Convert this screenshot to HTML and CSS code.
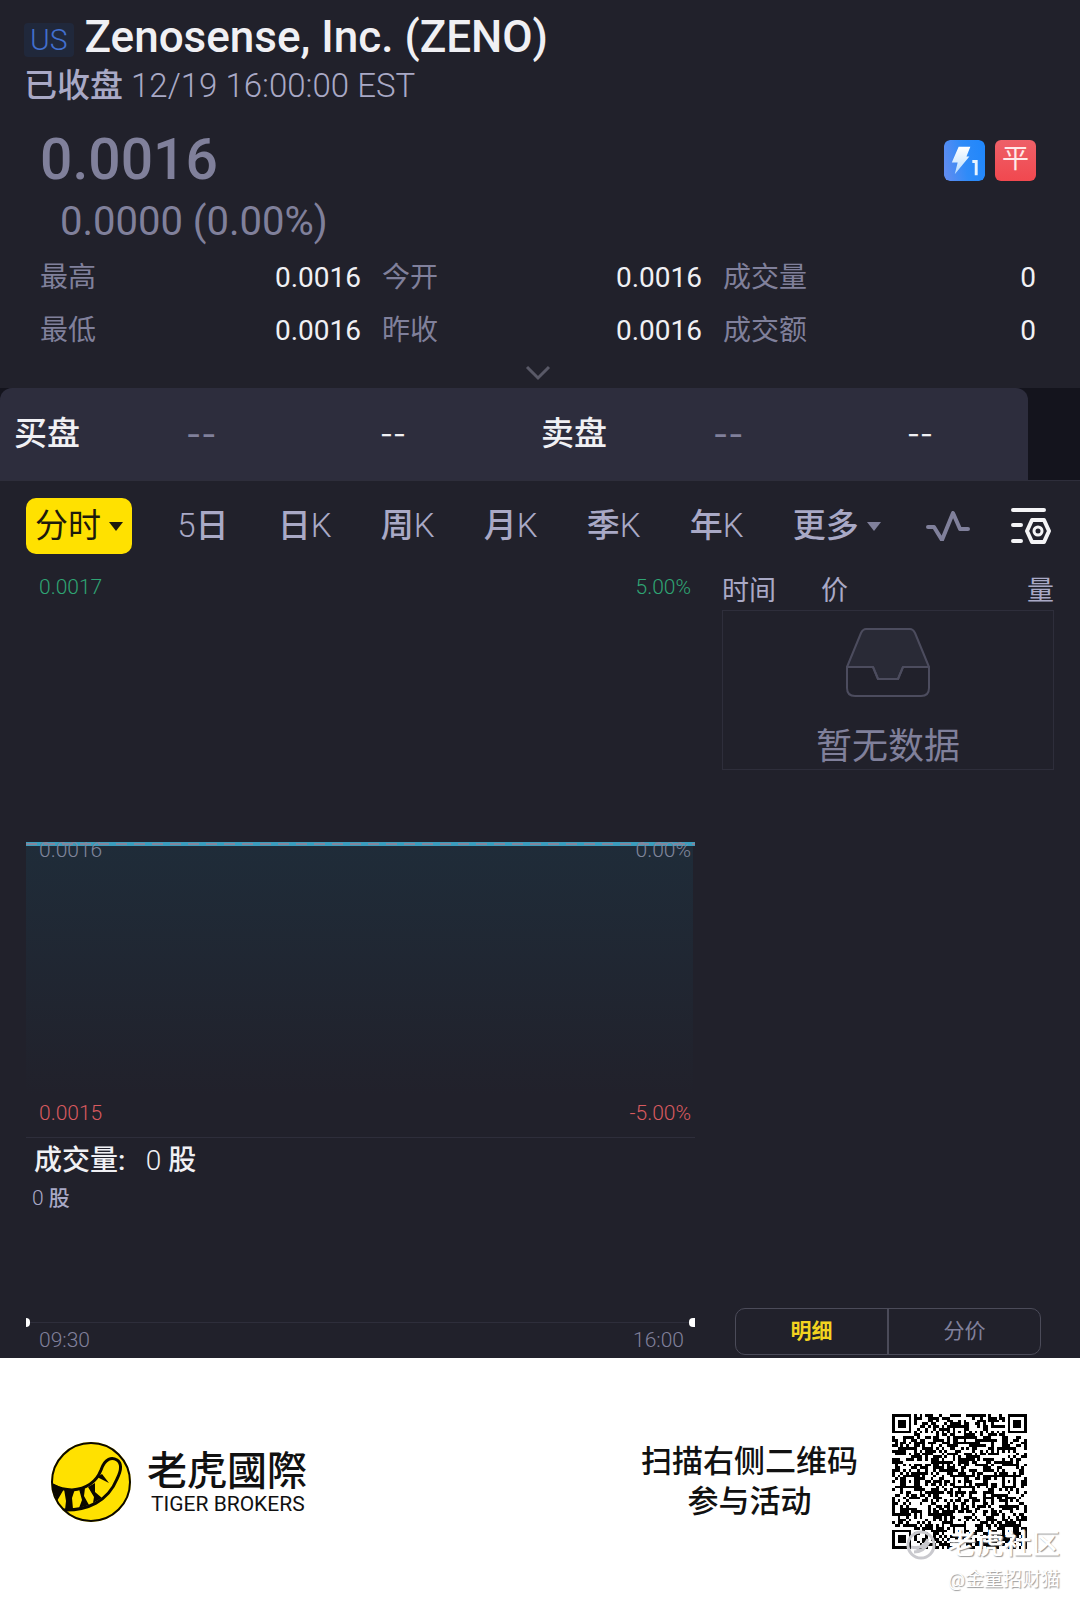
FILE: index.html
```html
<!DOCTYPE html>
<html lang="zh-CN">
<head>
    <meta charset="UTF-8">
    <meta name="viewport" content="width=device-width, initial-scale=1.0">
    <title>Zenosense, Inc. (ZENO)</title>
    <link rel="stylesheet" href="styles.css">
</head>
<body>
    <main class="quote">
        <header class="head">
            <div class="title-row">
                <span class="market">US</span>
                <h1>Zenosense, Inc. (ZENO)</h1>
            </div>
            <p class="status"><b>已收盘</b> 12/19 16:00:00 EST</p>
        </header>

        <section class="summary">
            <div class="price-row">
                <div class="price">0.0016</div>
                <div class="badges">
                    <svg class="badge" viewBox="0 0 42 42" role="img" aria-label="Level 1">
                        <defs>
                            <linearGradient id="blue" x1="0" y1="0.6" x2="1" y2="0.4">
                                <stop offset="0" stop-color="#5f8cf0"/>
                                <stop offset="0.5" stop-color="#2f8bf8"/>
                                <stop offset="1" stop-color="#2187fb"/>
                            </linearGradient>
                            <linearGradient id="bolt" x1="0" y1="0" x2="0" y2="1">
                                <stop offset="0" stop-color="#ffffff"/>
                                <stop offset="1" stop-color="#b5dcff"/>
                            </linearGradient>
                        </defs>
                        <rect width="42" height="42" rx="6" fill="url(#blue)"/>
                        <path d="M15 7h12l-4 10h3L11 35l3-12H8z" fill="url(#bolt)"/>
                        <path d="M29 22h4v14" fill="none" stroke="#e8f4ff" stroke-width="3"/>
                    </svg>
                    <span class="badge flat">平</span>
                </div>
            </div>
            <div class="change">0.0000 (0.00%)</div>
            <dl class="stats">
                <div><dt>最高</dt><dd>0.0016</dd></div>
                <div><dt>今开</dt><dd>0.0016</dd></div>
                <div><dt>成交量</dt><dd>0</dd></div>
                <div><dt>最低</dt><dd>0.0016</dd></div>
                <div><dt>昨收</dt><dd>0.0016</dd></div>
                <div><dt>成交额</dt><dd>0</dd></div>
            </dl>
            <button class="expand" type="button" aria-label="展开">
                <svg width="26" height="16" viewBox="0 0 26 16"><path d="M2 2l11 11L24 2" fill="none" stroke="#595967" stroke-width="3"/></svg>
            </button>
        </section>

        <section class="book">
            <div class="book-inner">
                <strong>买盘</strong><span class="level">--</span><span class="size">--</span>
                <strong>卖盘</strong><span class="level">--</span><span class="size">--</span>
            </div>
        </section>

        <nav class="tabs">
            <button class="tab active" type="button">分时<i class="caret"></i></button>
            <button class="tab" type="button"><span>5</span>日</button>
            <button class="tab" type="button">日<span>K</span></button>
            <button class="tab" type="button">周<span>K</span></button>
            <button class="tab" type="button">月<span>K</span></button>
            <button class="tab" type="button">季<span>K</span></button>
            <button class="tab" type="button">年<span>K</span></button>
            <button class="tab" type="button">更多<i class="caret"></i></button>
            <button type="button" aria-label="画线">
                <svg width="44" height="30" viewBox="0 2 44 30"><path d="M2 18h6l8 13L27 4l7 16h8" fill="none" stroke="#80809b" stroke-width="4" stroke-linecap="round" stroke-linejoin="round"/></svg>
            </button>
            <button type="button" aria-label="设置">
                <svg width="41" height="38" viewBox="0 0 41 38" fill="none" stroke="#f4f4f6" stroke-width="4">
                    <path d="M2 3h31M2 18h8M2 34h8" stroke-linecap="round"/>
                    <path d="M21 13h12l5 11-5 11H21l-5-11z" stroke-linejoin="round"/>
                    <circle cx="27" cy="24" r="4" stroke-width="3"/>
                </svg>
            </button>
        </nav>

        <section class="body">
            <div class="charts">
                <div class="chart">
                    <svg class="plot" viewBox="0 0 669 567" preserveAspectRatio="none" aria-hidden="true">
                        <defs>
                            <linearGradient id="area" x1="0" y1="0" x2="0" y2="1">
                                <stop offset="0" stop-color="#1f2c39"/>
                                <stop offset="1" stop-color="#21212b"/>
                            </linearGradient>
                        </defs>
                        <rect x="0" y="274" width="667" height="250" fill="url(#area)"/>
                        <path d="M0 274h669" stroke="#3a9dbd" stroke-width="4"/>
                        <path d="M0 274h669" stroke="#80869c" stroke-width="2" stroke-dasharray="11 7"/>
                    </svg>
                    <div class="scale up"><span>0.0017</span><span>5.00%</span></div>
                    <div class="scale mid"><span>0.0016</span><span>0.00%</span></div>
                    <div class="scale down"><span>0.0015</span><span>-5.00%</span></div>
                </div>
                <div class="volume">
                    <h2><b>成交量:</b>&nbsp; &nbsp;0 <b>股</b></h2>
                    <p>0 <b>股</b></p>
                </div>
                <div class="axis"><span>09:30</span><span>16:00</span></div>
            </div>

            <aside class="trades">
                <div class="trades-head"><span>时间</span><span>价</span><span>量</span></div>
                <div class="empty">
                    <svg width="86" height="70" viewBox="0 0 86 70" stroke="#4c4c5e" stroke-width="2" stroke-linejoin="round">
                        <path d="M2 39L16 5q2-4 5-4h44q3 0 5 4l14 34H58l-5 12H33l-5-12z" fill="#292a36"/>
                        <path d="M2 39v21q0 8 8 8h66q8 0 8-8V39H58l-5 12H33l-5-12z" fill="none"/>
                    </svg>
                    <p>暂无数据</p>
                </div>
                <div class="switch">
                    <button class="on" type="button">明细</button>
                    <button type="button">分价</button>
                </div>
            </aside>
        </section>
    </main>

    <footer class="foot">
        <div class="brand">
            <svg width="82" height="82" viewBox="0 0 82 82" aria-hidden="true">
                <defs><clipPath id="disc"><circle cx="41" cy="41" r="39"/></clipPath></defs>
                <circle cx="41" cy="41" r="40" fill="#ffe100"/>
                <g clip-path="url(#disc)">
                    <path d="M0 43Q12 49 22 49 44 47 51 29C55 17 62 16 67 19 73 23 70 32 67 38 58 60 38 70 12 69" fill="none" stroke="#0b0800" stroke-width="3"/>
                    <path d="M0 41l14 7-7 12zM14 48h11l-3 9 1 11-8 1 1-9zM29 48l6-1-1 8 5 9-10 3 3-8zM38 46l7-4v9l7 6-9 5 1-6zM47 36l5-3 7 9z" fill="#0b0800"/>
                </g>
                <circle cx="41" cy="41" r="39" fill="none" stroke="#0b0800" stroke-width="2"/>
            </svg>
            <div class="brand-name">
                <strong lang="zh-TW">老虎國際</strong>
                <span>TIGER BROKERS</span>
            </div>
        </div>
        <div class="invite">
            <p>扫描右侧二维码<br>参与活动</p>
            <svg class="qr" id="qr" viewBox="0 0 49 49" shape-rendering="crispEdges" role="img" aria-label="二维码"></svg>
        </div>
        <div class="watermark">
            <div class="community">
                <svg width="30" height="30" viewBox="0 0 30 30" fill="none" stroke="#c9c9ce" stroke-width="3"><circle cx="15" cy="15" r="13"/><path d="M5 17q12 3 17-8M8 22q10 0 15-10M12 16v6M17 14v6"/></svg>
                <span>老虎社区</span>
            </div>
            <span class="author">@金童招财猫</span>
        </div>
    </footer>
    <script src="qr.js"></script>
</body>
</html>
```
FILE: styles.css
```css
:root {
    --bg: #21212b;
    --panel: #2d2d3d;
    --line: #2e2e3b;
    --text: #f0f0f4;
    --soft: #a9a9c6;
    --muted: #80809b;
    --yellow: #ffe100;
}

* { box-sizing: border-box; }
body { margin: 0; background: #fff; color: var(--text); font-family: Roboto, "Noto Sans CJK SC", sans-serif; }
h1, h2, p, dl, dd { margin: 0; }
b { font-weight: 500; }
button { padding: 0; border: 0; background: none; color: inherit; font: inherit; cursor: pointer; }
svg { display: block; }

.quote { background: var(--bg); }

/* title */
.head { padding: 11px 24px 0; }
.title-row { display: flex; align-items: center; gap: 11px; }
.market { margin-top: 6px; padding: 0 6px; border-radius: 4px; background: #20283b; color: #426fce; font-size: 30px; font-weight: 300; line-height: 34px; }
h1 { font-size: 44px; font-weight: 500; line-height: 52px; }
.status { color: var(--soft); font-size: 33px; font-weight: 300; line-height: 46px; }

/* price */
.summary { padding: 18px 44px 0 40px; }
.price-row { display: flex; justify-content: space-between; align-items: center; }
.price { color: var(--muted); font-size: 57px; font-weight: 500; line-height: 66px; }
.badges { display: flex; gap: 10px; }
.badge { width: 41px; height: 41px; border-radius: 6px; }
.flat { background: linear-gradient(180deg, #ee6068, #f1484f); color: #ffe9e9; font-size: 27px; line-height: 39px; text-align: center; }
.change { padding-left: 20px; color: var(--muted); font-size: 40px; line-height: 58px; }
.stats { display: grid; grid-template-columns: 321fr 320fr 313fr; column-gap: 21px; }
.stats div { display: flex; justify-content: space-between; font-size: 28px; line-height: 53px; }
.stats dt { color: var(--muted); }
.expand { display: block; margin: 0 auto; padding: 8px 0 7px; }

/* bid / ask */
.book { padding-right: 52px; border-bottom: 1px solid var(--line); background: #14141d; }
.book-inner { display: grid; grid-template-columns: 172fr 194fr 161fr 172fr 194fr 121fr; padding-left: 14px; border-radius: 12px 12px 0 0; background: var(--panel); font-size: 33px; line-height: 92px; }
.book-inner strong { font-weight: 500; }
.level, .size { font-family: Inter, sans-serif; }
.level { color: var(--muted); }
.size { font-size: 28px; }

/* period tabs */
.tabs { display: flex; justify-content: space-between; align-items: center; padding: 17px 28px 16px 26px; color: var(--soft); font-size: 33px; line-height: 56px; }
.tab { padding: 0 4px; font-weight: 500; }
.tab span { font-weight: 300; }
.tabs .active { padding: 0 9px; border-radius: 10px; background: var(--yellow); color: #1d1a0c; font-weight: 400; }
.caret { display: inline-block; margin-left: 8px; border: 7px solid transparent; border-top: 9px solid var(--muted); border-bottom: 0; vertical-align: 6px; }
.active .caret { border-top-color: currentColor; }

/* chart and trades */
.body { display: grid; grid-template-columns: 669fr 332fr; column-gap: 27px; padding: 0 26px; }
.chart { display: grid; position: relative; height: 568px; align-content: space-between; padding: 3px 4px 10px 13px; border-bottom: 1px solid var(--line); }
.plot { position: absolute; inset: 0; width: 100%; height: 100%; }
.scale { display: flex; position: relative; justify-content: space-between; font-size: 21px; font-weight: 300; line-height: 28px; }
.up { color: #2fa574; }
.mid { color: #80869c; }
.down { color: #d85a5f; }
.volume { min-height: 184px; padding: 2px 6px; }
.volume h2 { padding-left: 2px; font-size: 28px; font-weight: 300; line-height: 42px; }
.volume p { color: var(--soft); font-size: 21px; font-weight: 300; line-height: 32px; }
.axis { display: flex; position: relative; justify-content: space-between; padding: 3px 11px 4px 13px; border-top: 1px solid var(--line); color: var(--muted); font-size: 21px; font-weight: 300; line-height: 28px; }
.axis::before, .axis::after { content: ""; position: absolute; top: -5px; height: 9px; background: #fff; }
.axis::before { left: 0; width: 4px; border-radius: 0 4px 4px 0; }
.axis::after { right: 0; width: 6px; border-radius: 4px 0 0 4px; }

.trades { display: flex; flex-direction: column; }
.trades-head { display: grid; grid-template-columns: 99px 1fr auto; padding-top: 2px; color: var(--soft); font-size: 27px; line-height: 38px; }
.empty { display: flex; flex-direction: column; align-items: center; border: 1px solid var(--line); padding: 17px 0 0; }
.empty p { padding-top: 27px; color: var(--muted); font-size: 36px; line-height: 44px; }
.switch { display: flex; margin: auto 13px 3px; border: 1px solid #4b4b59; border-radius: 10px; color: var(--muted); font-size: 21px; line-height: 45px; }
.switch button { flex: 1; }
.switch button + button { border-left: 2px solid #4b4b59; }
.switch .on { color: #f3d320; font-weight: 700; }

/* share footer */
.foot { display: flex; position: relative; justify-content: space-between; align-items: center; padding: 56px 53px 57px 50px; color: #111; }
.brand { display: flex; align-items: center; gap: 15px; }
.brand-name { display: flex; flex-direction: column; }
.brand-name strong { font-family: "Noto Sans CJK TC", sans-serif; font-size: 40px; font-weight: 500; line-height: 44px; }
.brand-name span { padding-left: 4px; font-size: 21px; line-height: 28px; }
.invite { display: flex; align-items: center; gap: 34px; font-size: 31px; font-weight: 500; line-height: 40px; text-align: center; }
.qr { width: 135px; height: 135px; }
.watermark { position: absolute; right: 20px; bottom: 12px; color: #fff; text-align: right; text-shadow: 1px 1px 1px #999; }
.community { display: flex; align-items: center; gap: 12px; font-size: 28px; font-weight: 500; line-height: 42px; }
.author { font-size: 19px; line-height: 28px; }
```
FILE: qr.js
```js
// Draws a 49x49 module code into the #qr svg
const SIZE = 49;
const qr = document.getElementById('qr');
let seed = 20191;

function next() {
    seed = (seed * 1103515245 + 12345) % 2147483648;
    return seed / 2147483648;
}

// square rings around a centre, null when the cell is outside
function ring(x, y, cx, cy, reach) {
    const d = Math.max(Math.abs(x - cx), Math.abs(y - cy));
    return d > reach ? null : d;
}

function isDark(x, y) {
    const noise = next() < 0.5;
    for (const [cx, cy] of [[3, 3], [45, 3], [3, 45]]) {
        const d = ring(x, y, cx, cy, 4);
        if (d !== null) return d < 2 || d === 3;
    }
    for (const [cx, cy] of [[24, 6], [6, 24], [24, 24], [42, 24], [24, 42], [42, 42]]) {
        const d = ring(x, y, cx, cy, 2);
        if (d !== null) return d !== 1;
    }
    if (x === 6 || y === 6) return (x + y) % 2 === 0;
    return noise;
}

let d = '';
for (let y = 0; y < SIZE; y++) {
    for (let x = 0; x < SIZE; x++) {
        if (isDark(x, y)) d += `M${x} ${y}h1v1h-1z`;
    }
}
qr.innerHTML = `<path d="${d}" fill="#000"/>`;
```
